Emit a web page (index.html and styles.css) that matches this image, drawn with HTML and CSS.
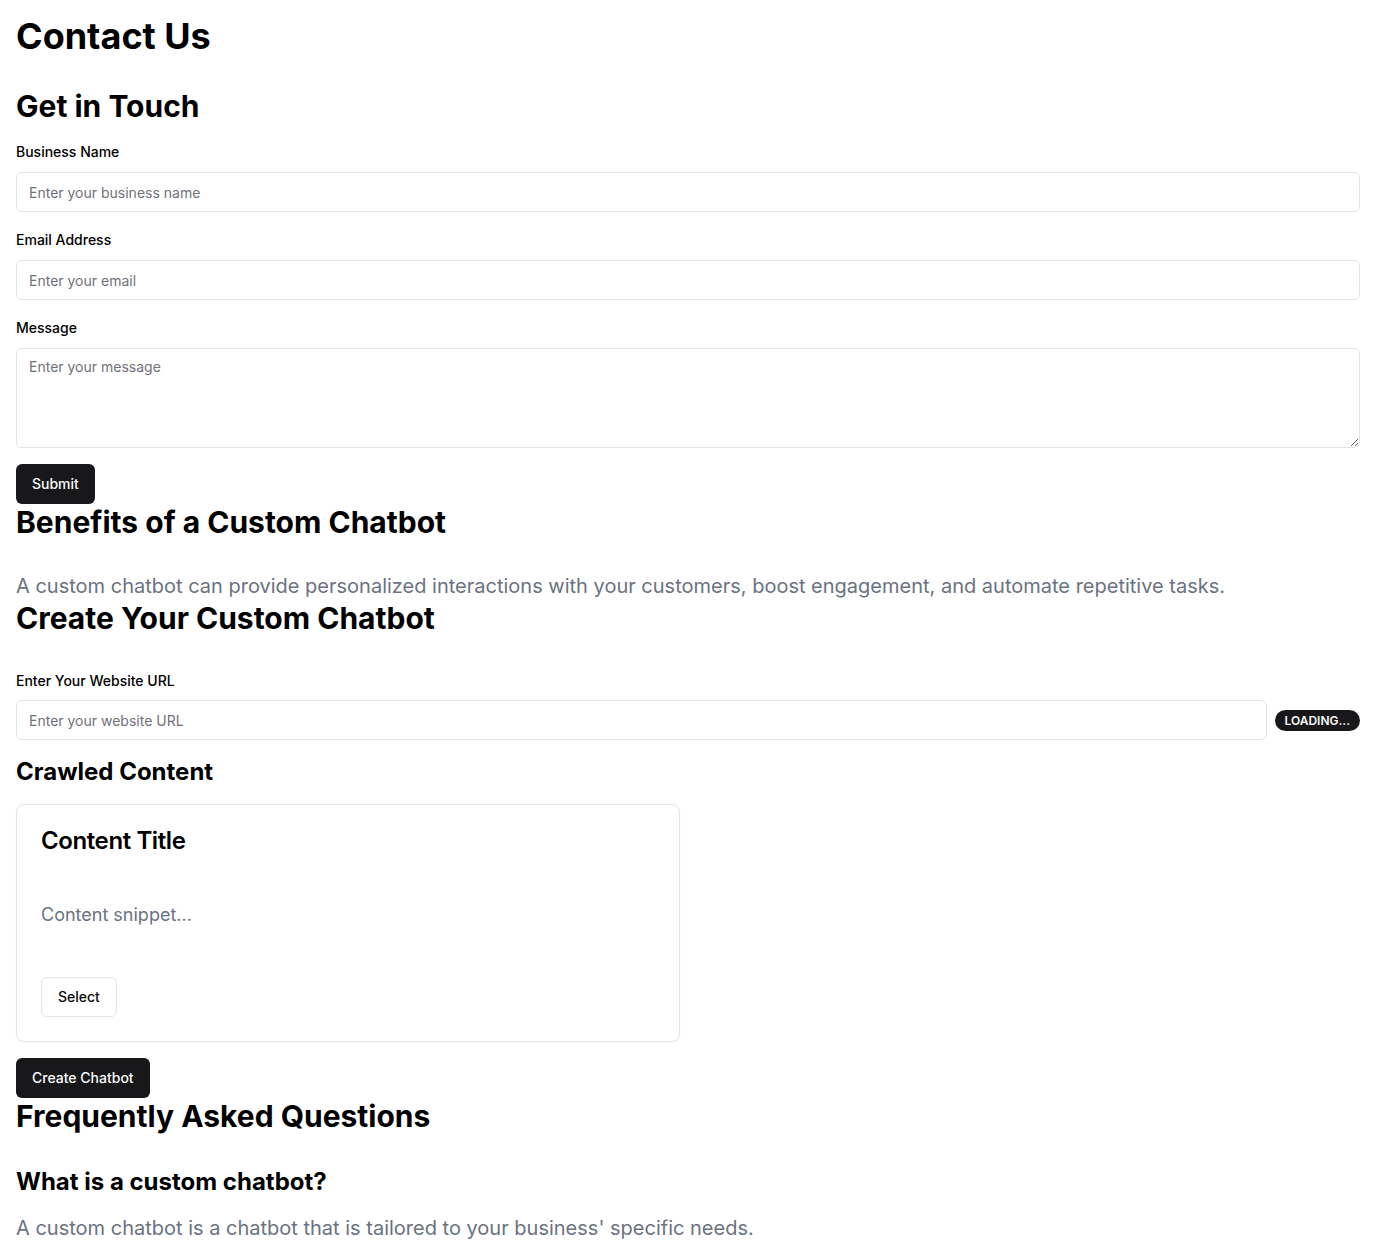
FILE: index.html
```html
<!DOCTYPE html>
<html lang="en">
<head>
<meta charset="utf-8">
<title>Contact Us</title>
<link rel="stylesheet" href="styles.css">
</head>
<body>
<main class="page">
  <h1 class="title">Contact Us</h1>

  <section class="contact">
    <h2 class="h2 h2-form">Get in Touch</h2>
    <form class="form">
      <div class="field">
        <label class="label" for="bn">Business Name</label>
        <input class="input" id="bn" type="text" placeholder="Enter your business name">
      </div>
      <div class="field">
        <label class="label" for="em">Email Address</label>
        <input class="input" id="em" type="email" placeholder="Enter your email">
      </div>
      <div class="field">
        <label class="label" for="msg">Message</label>
        <textarea class="input textarea" id="msg" placeholder="Enter your message"></textarea>
      </div>
      <div class="actions">
        <button class="btn btn-primary" type="button">Submit</button>
      </div>
    </form>
  </section>

  <section class="benefits">
    <h2 class="h2 h2-spaced">Benefits of a Custom Chatbot</h2>
    <p class="lead">A custom chatbot can provide personalized interactions with your customers, boost engagement, and automate repetitive tasks.</p>
  </section>

  <section class="create">
    <h2 class="h2 h2-spaced">Create Your Custom Chatbot</h2>
    <div class="field field-url">
      <label class="label" for="url">Enter Your Website URL</label>
      <div class="url-row">
        <input class="input" id="url" type="text" placeholder="Enter your website URL">
        <span class="badge">LOADING...</span>
      </div>
    </div>
    <h3 class="h3 crawled">Crawled Content</h3>
    <div class="grid">
      <div class="card">
        <div class="card-header"><h4 class="card-title">Content Title</h4></div>
        <div class="card-content"><p class="snippet">Content snippet...</p></div>
        <div class="card-footer"><button class="btn btn-outline" type="button">Select</button></div>
      </div>
    </div>
    <button class="btn btn-primary create-btn" type="button">Create Chatbot</button>
  </section>

  <section class="faq">
    <h2 class="h2 h2-spaced">Frequently Asked Questions</h2>
    <h3 class="h3 question">What is a custom chatbot?</h3>
    <p class="lead">A custom chatbot is a chatbot that is tailored to your business' specific needs.</p>
  </section>
</main>
</body>
</html>
```
FILE: styles.css
```css
* { box-sizing: border-box; }
html, body { margin: 0; padding: 0; background: #ffffff; }
body {
  font-family: Inter, "Noto Sans", "Liberation Sans", sans-serif;
  color: #09090b;
}
.page { padding: 16px; }
h1, h2, h3, h4, p { margin: 0; }

.title {
  font-size: 36px;
  line-height: 40px;
  font-weight: 700;
  color: #000;
  margin-bottom: 32px;
}
.h2 {
  font-size: 30px;
  line-height: 36px;
  font-weight: 700;
  color: #000;
}
.h2-form { margin-bottom: 18px; }
.h2-spaced { margin-bottom: 32px; }
.h3 {
  font-size: 24px;
  line-height: 32px;
  font-weight: 700;
  color: #000;
}

.form { display: flex; flex-direction: column; }
.field { display: flex; flex-direction: column; gap: 10px; }
.field + .field { margin-top: 18px; }
.label {
  font-size: 14px;
  line-height: 20px;
  font-weight: 500;
  color: #000;
}
.input {
  width: 100%;
  height: 40px;
  border: 1px solid #e4e4e7;
  border-radius: 6px;
  padding: 8px 12px;
  font-family: inherit;
  font-size: 14px;
  line-height: 20px;
  color: #09090b;
  background: #fff;
  outline: none;
}
.input::placeholder { color: #71717a; }
.textarea { height: 100px; resize: vertical; display: block; }
.actions { margin-top: 16px; }

.btn {
  font-family: inherit;
  font-size: 14px;
  line-height: 20px;
  font-weight: 500;
  height: 40px;
  padding: 0 16px;
  border-radius: 6px;
  cursor: pointer;
}
.btn-primary {
  background: #18181b;
  color: #fafafa;
  border: 0;
}
.btn-outline {
  background: #fff;
  color: #09090b;
  border: 1px solid #e4e4e7;
}

.lead {
  font-size: 20px;
  line-height: 28px;
  color: #6b7280;
}

.field-url { padding-top: 3px; gap: 9px; }
.url-row { display: flex; align-items: center; gap: 8px; }
.url-row .input { flex: 1; }
.badge {
  background: #18181b;
  color: #fafafa;
  font-size: 12px;
  line-height: 16px;
  font-weight: 600;
  padding: 3px 10px 2px;
  border-radius: 9999px;
  white-space: nowrap;
}
.crawled { margin-top: 16px; margin-bottom: 16px; }
.grid {
  display: grid;
  grid-template-columns: 1fr 1fr;
  gap: 16px;
}
.card {
  border: 1px solid #e4e4e7;
  border-radius: 8px;
  background: #fff;
  box-shadow: 0 1px 2px rgba(0,0,0,0.04);
}
.card-header { padding: 24px; }
.card-title {
  font-size: 24px;
  line-height: 24px;
  font-weight: 600;
  letter-spacing: -0.4px;
  color: #000;
}
.card-content { padding: 24px; }
.snippet { font-size: 18px; line-height: 28px; color: #6b7280; }
.card-footer { padding: 24px; }
.create-btn { margin-top: 16px; display: block; }

.question { margin-bottom: 16px; }
```
